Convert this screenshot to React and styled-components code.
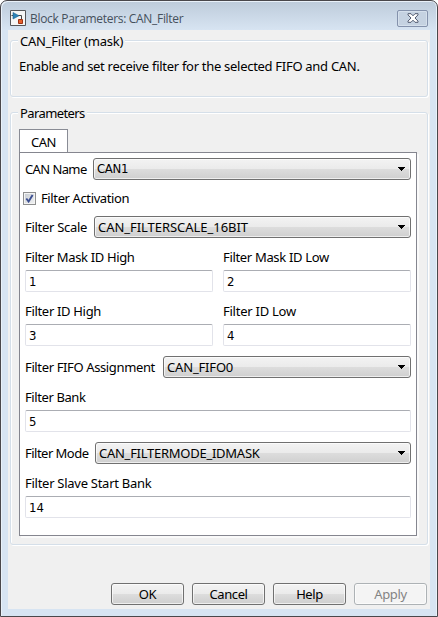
import React from 'react';
import styled, { createGlobalStyle } from 'styled-components';

const GlobalStyle = createGlobalStyle`
  * { box-sizing: border-box; }
  body { margin: 0; background: #fff; overflow: hidden; }
`;

const Window = styled.main`
  display: flex;
  flex-direction: column;
  width: 438px;
  height: 617px;
  padding: 0 7px 7px;
  border: 1px solid #49474b;
  border-radius: 7px 7px 0 0;
  background: linear-gradient(#bdcbda, #d7e4f2 29px, #d7e4f2);
  box-shadow: inset 1px 1px 0 #e9f1f9, inset -1px 0 0 #e9f1f9;
  font: 13px/18px "Noto Sans", "Open Sans", sans-serif;
  color: #000;
`;

const TitleBar = styled.header`
  display: flex;
  align-items: center;
  flex: 0 0 29px;
  padding: 5px 2px 0;
`;

const Title = styled.h1`
  flex: 1;
  margin: 2px 0 0 4px;
  font: 12px/18px "Open Sans", "Noto Sans", sans-serif;
  letter-spacing: -0.31px;
  color: #45505c;
`;

const CloseButton = styled.button`
  display: grid;
  place-items: center;
  width: 31px;
  height: 17px;
  padding: 0;
  border: 1px solid #8492ac;
  border-radius: 2px;
  background: #c5d2e1;
  box-shadow: inset 0 0 0 1px #d5e0ec;
`;

const Client = styled.div`
  flex: 1;
  display: flex;
  flex-direction: column;
  padding: 10px 2px 4px;
  background: #f0f0f0;
`;

const Group = styled.section`
  height: ${(p) => p.$height}px;
  margin-bottom: 15px;
  padding: 0 9px;
  border: 1px solid #d5dfe9;
  border-radius: 3px;
  box-shadow: 1px 1px 0 #fff, inset 1px 1px 0 #fff;
`;

const Legend = styled.h2`
  width: fit-content;
  height: 18px;
  margin: -9px 0 0 -2px;
  padding: 0 2px;
  background: #f0f0f0;
  font: inherit;
  letter-spacing: ${(p) => p.$track}px;
`;

const Description = styled.p`
  margin: 7px 0 0 -1px;
  white-space: nowrap;
  letter-spacing: -0.29px;
`;

const Tab = styled.div`
  width: 49px;
  height: 24px;
  margin: 7px 0 -1px -1px;
  padding-left: 11px;
  border: 1px solid #898c95;
  border-bottom: 0;
  background: #fff;
  line-height: 24px;
  letter-spacing: -0.45px;
`;

const Panel = styled.div`
  display: flex;
  flex-direction: column;
  width: 398px;
  height: 384px;
  margin-left: -1px;
  padding: 5px 5px 0;
  border: 1px solid #85868f;
  background: #fff;
  box-shadow: 2px 2px 0 #fafafa;
`;

const Row = styled.div`
  display: flex;
  align-items: center;
  height: 22px;
  margin-bottom: ${(p) => p.$gap}px;
`;

const Label = styled.span`
  flex: none;
  width: ${(p) => p.$width}px;
  white-space: nowrap;
  letter-spacing: ${(p) => p.$track}px;
`;

const face = `linear-gradient(#f3f3f3, #ebebeb 48%, #dddddd 50%, #cfcfcf)`;

const Combo = styled.div`
  flex: 1;
  display: flex;
  align-items: center;
  justify-content: space-between;
  height: 22px;
  padding: 0 5px 0 3px;
  border: 1px solid #707070;
  border-radius: 3px;
  background: ${face};
  box-shadow: inset 0 0 0 1px rgba(255, 255, 255, 0.65);
  font-family: ${(p) => (p.$numeric ? '"DejaVu Sans Condensed"' : '"Noto Sans"')}, sans-serif;
  letter-spacing: ${(p) => p.$track}px;
`;

const CheckBox = styled.span`
  display: grid;
  place-items: center;
  width: 13px;
  height: 13px;
  margin: 0 5px 0 -2px;
  border: 1px solid #8e8f8f;
  background: linear-gradient(135deg, #c5cad0, #f3f4f5);
  box-shadow: inset 0 0 0 1px #f4f4f4;
`;

const Columns = styled.div`
  display: grid;
  grid-template-columns: 1fr 1fr;
  column-gap: 10px;
`;

const Field = styled.label`
  display: flex;
  flex-direction: column;
  height: ${(p) => p.$height}px;
`;

const Input = styled.input`
  width: 100%;
  height: 22px;
  margin-top: 4px;
  padding: 1px 3px 0;
  border: 1px solid #e2e3ea;
  border-top-color: #abadb3;
  border-radius: 2px;
  outline: 0;
  background: #fff;
  color: #000;
  font: 13px "DejaVu Sans Condensed", sans-serif;
`;

const Footer = styled.footer`
  display: flex;
  justify-content: flex-end;
  gap: 8px;
  margin: auto 1px 0 0;
`;

const Button = styled.button`
  width: 73px;
  height: 22px;
  padding: 0;
  border: 1px solid #707070;
  border-radius: 3px;
  background: ${face};
  box-shadow: inset 0 0 0 1px rgba(255, 255, 255, 0.65);
  color: #000;
  font: 13px/20px "Noto Sans", sans-serif;
  letter-spacing: -0.4px;

  &:disabled {
    border-color: #adb2b5;
    background: #f4f4f4;
    color: #838383;
  }
`;

function BlockIcon() {
  return (
    <svg width="16" height="16" viewBox="0 0 16 16">
      <path d="M.5.5h15v15H.5z" fill="#f5f5f5" stroke="#55565a" />
      <path d="M8 5.5h3.5V9M1.5 5.5h2" fill="none" stroke="#444" />
      <path d="M3 2.5v6.5L9 5.7z" fill="#2c83b8" stroke="#1b608f" strokeWidth=".6" />
      <path d="M8.5 9.5h4v4h-4z" fill="#e5602d" stroke="#9d3214" />
    </svg>
  );
}

function CloseIcon() {
  return (
    <svg width="12" height="10" viewBox="0 0 12 10">
      <path d="M1 .7h3L6 2.8 8 .7h3v1.2L8 5l3 3.1v1.2H8L6 7.2 4 9.3H1V8.1L4 5 1 1.9z" fill="#fff" stroke="#515a70" />
    </svg>
  );
}

function Arrow() {
  return (
    <svg width="7" height="4" viewBox="0 0 7 4" shapeRendering="crispEdges">
      <path d="M0 0h7v1H6v1H5v1H4v1H3V3H2V2H1V1H0z" />
    </svg>
  );
}

function Check() {
  return (
    <svg width="9" height="9" viewBox="0 0 9 9">
      <path d="M1.3 4.5 3.6 7.5 7.6 1" fill="none" stroke="#3c4f91" strokeWidth="1.9" />
    </svg>
  );
}

function Select({ label, width, track, value, valueTrack, gap, numeric }) {
  return (
    <Row $gap={gap}>
      <Label $width={width} $track={track}>{label}</Label>
      <Combo $track={valueTrack} $numeric={numeric}>{value}<Arrow /></Combo>
    </Row>
  );
}

function TextField({ label, track, value, height }) {
  return (
    <Field $height={height}>
      <Label $track={track}>{label}</Label>
      <Input defaultValue={value} />
    </Field>
  );
}

export default function App() {
  return (
    <>
      <GlobalStyle />
      <Window>
        <TitleBar>
          <BlockIcon />
          <Title>Block Parameters: CAN_Filter</Title>
          <CloseButton aria-label="Close"><CloseIcon /></CloseButton>
        </TitleBar>
        <Client>
          <Group $height={57}>
            <Legend $track={-0.21}>CAN_Filter (mask)</Legend>
            <Description>Enable and set receive filter for the selected FIFO and CAN.</Description>
          </Group>
          <Group $height={433}>
            <Legend $track={-0.6}>Parameters</Legend>
            <Tab>CAN</Tab>
            <Panel>
              <Select label="CAN Name" width={68} track={-0.6} value="CAN1" valueTrack={-0.3} gap={7} numeric />
              <Row $gap={7}>
                <CheckBox><Check /></CheckBox>
                <Label $track={-0.38}>Filter Activation</Label>
              </Row>
              <Select label="Filter Scale" width={69} track={-0.3} value="CAN_FILTERSCALE_16BIT" valueTrack={-0.04} gap={10} />
              <Columns>
                <TextField label="Filter Mask ID High" track={-0.35} value="1" height={54} />
                <TextField label="Filter Mask ID Low" track={-0.33} value="2" height={54} />
                <TextField label="Filter ID High" track={-0.32} value="3" height={54} />
                <TextField label="Filter ID Low" track={-0.25} value="4" height={54} />
              </Columns>
              <Select label="Filter FIFO Assignment" width={138} track={-0.37} value="CAN_FIFO0" valueTrack={-0.17} gap={10} />
              <TextField label="Filter Bank" track={-0.4} value="5" height={54} />
              <Select label="Filter Mode" width={70} track={-0.52} value="CAN_FILTERMODE_IDMASK" valueTrack={-0.26} gap={10} />
              <TextField label="Filter Slave Start Bank" track={-0.27} value="14" height={44} />
            </Panel>
          </Group>
          <Footer>
            <Button>OK</Button>
            <Button>Cancel</Button>
            <Button>Help</Button>
            <Button disabled>Apply</Button>
          </Footer>
        </Client>
      </Window>
    </>
  );
}
